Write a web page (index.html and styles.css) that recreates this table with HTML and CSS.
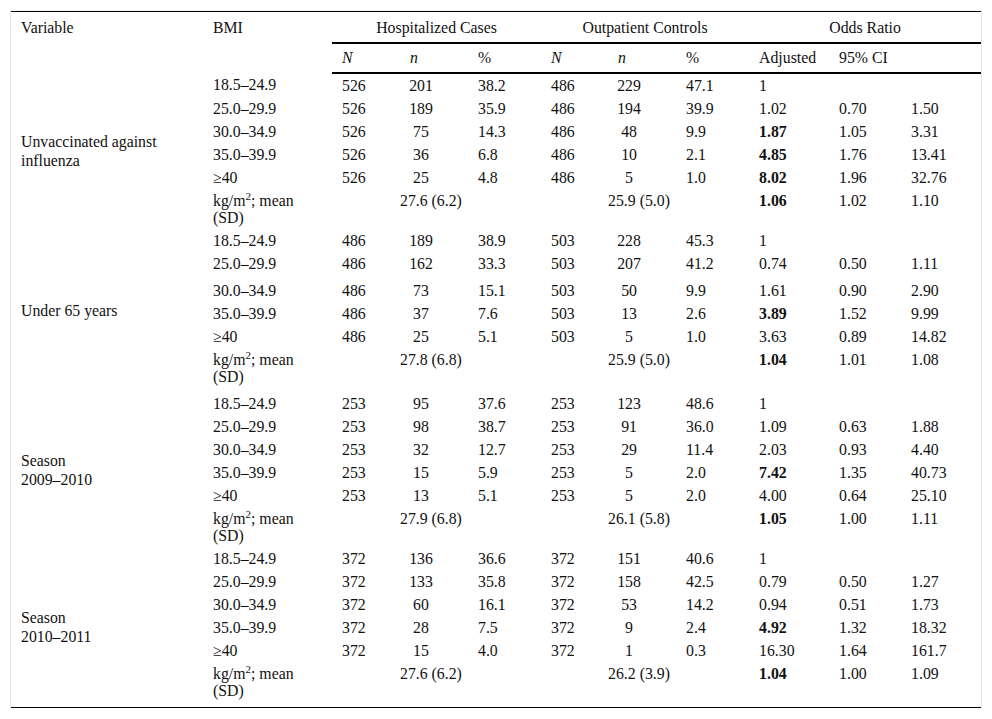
FILE: index.html
```html
<!DOCTYPE html>
<html>
<head>
<meta charset="utf-8">
<link rel="stylesheet" href="styles.css">
</head>
<body>
<div class="frame">
<table class="tbl">
<colgroup>
<col class="c-var"><col class="c-bmi"><col class="c-n1"><col class="c-n2"><col class="c-p"><col class="c-n1b"><col class="c-n2"><col class="c-p"><col class="c-adj"><col class="c-ci"><col class="c-up">
</colgroup>
<thead>
<tr class="h1">
<th rowspan="2" class="top">Variable</th>
<th rowspan="2" class="top">BMI</th>
<th colspan="3" class="grp">Hospitalized Cases</th>
<th colspan="3" class="grp">Outpatient Controls</th>
<th colspan="3" class="grp">Odds Ratio</th>
</tr>
<tr class="h2">
<th><i>N</i></th><th><i>n</i></th><th>%</th>
<th><i>N</i></th><th><i>n</i></th><th>%</th>
<th>Adjusted</th><th>95% CI</th><th></th>
</tr>
</thead>
<tbody>
<tr><td rowspan="6" class="var">Unvaccinated against<br>influenza</td><td>18.5–24.9</td><td>526</td><td class="ctr">201</td><td>38.2</td><td>486</td><td class="ctr">229</td><td>47.1</td><td>1</td><td></td><td></td></tr>
<tr><td>25.0–29.9</td><td>526</td><td class="ctr">189</td><td>35.9</td><td>486</td><td class="ctr">194</td><td>39.9</td><td>1.02</td><td>0.70</td><td>1.50</td></tr>
<tr><td>30.0–34.9</td><td>526</td><td class="ctr">75</td><td>14.3</td><td>486</td><td class="ctr">48</td><td>9.9</td><td><b>1.87</b></td><td>1.05</td><td>3.31</td></tr>
<tr><td>35.0–39.9</td><td>526</td><td class="ctr">36</td><td>6.8</td><td>486</td><td class="ctr">10</td><td>2.1</td><td><b>4.85</b></td><td>1.76</td><td>13.41</td></tr>
<tr><td>≥40</td><td>526</td><td class="ctr">25</td><td>4.8</td><td>486</td><td class="ctr">5</td><td>1.0</td><td><b>8.02</b></td><td>1.96</td><td>32.76</td></tr>
<tr><td>kg/m<sup>2</sup>; mean<br>(SD)</td><td></td><td class="mean">27.6 (6.2)</td><td></td><td></td><td class="mean2">25.9 (5.0)</td><td></td><td><b>1.06</b></td><td>1.02</td><td>1.10</td></tr>

<tr><td rowspan="6" class="var">Under 65 years</td><td>18.5–24.9</td><td>486</td><td class="ctr">189</td><td>38.9</td><td>503</td><td class="ctr">228</td><td>45.3</td><td>1</td><td></td><td></td></tr>
<tr class="pad"><td>25.0–29.9</td><td>486</td><td class="ctr">162</td><td>33.3</td><td>503</td><td class="ctr">207</td><td>41.2</td><td>0.74</td><td>0.50</td><td>1.11</td></tr>
<tr><td>30.0–34.9</td><td>486</td><td class="ctr">73</td><td>15.1</td><td>503</td><td class="ctr">50</td><td>9.9</td><td>1.61</td><td>0.90</td><td>2.90</td></tr>
<tr><td>35.0–39.9</td><td>486</td><td class="ctr">37</td><td>7.6</td><td>503</td><td class="ctr">13</td><td>2.6</td><td><b>3.89</b></td><td>1.52</td><td>9.99</td></tr>
<tr><td>≥40</td><td>486</td><td class="ctr">25</td><td>5.1</td><td>503</td><td class="ctr">5</td><td>1.0</td><td>3.63</td><td>0.89</td><td>14.82</td></tr>
<tr class="pad"><td>kg/m<sup>2</sup>; mean<br>(SD)</td><td></td><td class="mean">27.8 (6.8)</td><td></td><td></td><td class="mean2">25.9 (5.0)</td><td></td><td><b>1.04</b></td><td>1.01</td><td>1.08</td></tr>

<tr><td rowspan="6" class="var">Season<br>2009–2010</td><td>18.5–24.9</td><td>253</td><td class="ctr">95</td><td>37.6</td><td>253</td><td class="ctr">123</td><td>48.6</td><td>1</td><td></td><td></td></tr>
<tr><td>25.0–29.9</td><td>253</td><td class="ctr">98</td><td>38.7</td><td>253</td><td class="ctr">91</td><td>36.0</td><td>1.09</td><td>0.63</td><td>1.88</td></tr>
<tr><td>30.0–34.9</td><td>253</td><td class="ctr">32</td><td>12.7</td><td>253</td><td class="ctr">29</td><td>11.4</td><td>2.03</td><td>0.93</td><td>4.40</td></tr>
<tr><td>35.0–39.9</td><td>253</td><td class="ctr">15</td><td>5.9</td><td>253</td><td class="ctr">5</td><td>2.0</td><td><b>7.42</b></td><td>1.35</td><td>40.73</td></tr>
<tr><td>≥40</td><td>253</td><td class="ctr">13</td><td>5.1</td><td>253</td><td class="ctr">5</td><td>2.0</td><td>4.00</td><td>0.64</td><td>25.10</td></tr>
<tr><td>kg/m<sup>2</sup>; mean<br>(SD)</td><td></td><td class="mean">27.9 (6.8)</td><td></td><td></td><td class="mean2">26.1 (5.8)</td><td></td><td><b>1.05</b></td><td>1.00</td><td>1.11</td></tr>

<tr><td rowspan="6" class="var">Season<br>2010–2011</td><td>18.5–24.9</td><td>372</td><td class="ctr">136</td><td>36.6</td><td>372</td><td class="ctr">151</td><td>40.6</td><td>1</td><td></td><td></td></tr>
<tr><td>25.0–29.9</td><td>372</td><td class="ctr">133</td><td>35.8</td><td>372</td><td class="ctr">158</td><td>42.5</td><td>0.79</td><td>0.50</td><td>1.27</td></tr>
<tr><td>30.0–34.9</td><td>372</td><td class="ctr">60</td><td>16.1</td><td>372</td><td class="ctr">53</td><td>14.2</td><td>0.94</td><td>0.51</td><td>1.73</td></tr>
<tr><td>35.0–39.9</td><td>372</td><td class="ctr">28</td><td>7.5</td><td>372</td><td class="ctr">9</td><td>2.4</td><td><b>4.92</b></td><td>1.32</td><td>18.32</td></tr>
<tr><td>≥40</td><td>372</td><td class="ctr">15</td><td>4.0</td><td>372</td><td class="ctr">1</td><td>0.3</td><td>16.30</td><td>1.64</td><td>161.7</td></tr>
<tr class="last"><td>kg/m<sup>2</sup>; mean<br>(SD)</td><td></td><td class="mean">27.6 (6.2)</td><td></td><td></td><td class="mean2">26.2 (3.9)</td><td></td><td><b>1.04</b></td><td>1.00</td><td>1.09</td></tr>
</tbody>
</table>
</div>
</body>
</html>
```
FILE: styles.css
```css
html, body {
  margin: 0;
  padding: 0;
  background: #ffffff;
}
body {
  padding: 10px 10px 0 10px;
  font-family: "Liberation Serif", "Times New Roman", serif;
  font-size: 15.8px;
  color: #111;
}
.frame {
  width: 970px;
  border-left: 1px solid #e6e6e6;
  border-right: 1px solid #e6e6e6;
  border-top: 1px solid #f3f3f3;
}
.tbl {
  width: 970px;
  table-layout: fixed;
  border-collapse: collapse;
  border-spacing: 0;
  border-top: 1px solid #000;
  border-bottom: 1px solid #000;
}
.c-var { width: 192px; }
.c-bmi { width: 129px; }
.c-n1 { width: 68px; }
.c-n2 { width: 68px; }
.c-p { width: 73px; }
.c-n1b { width: 67px; }
.c-adj { width: 80px; }
.c-ci { width: 72px; }
.c-up { width: 80px; }

.tbl th {
  font-weight: normal;
  text-align: left;
  padding: 7px 10px 6px 10px;
  line-height: 17px;
  vertical-align: top;
}
.tbl th.grp {
  text-align: center;
  border-bottom: 2px solid #000;
}
.tbl tr.h2 th {
  padding-top: 5px;
  padding-bottom: 6px;
  border-bottom: 2px solid #000;
}
.tbl th i {
  font-style: italic;
}
.tbl td {
  padding: 3px 10px;
  line-height: 17px;
  vertical-align: top;
  text-align: left;
  white-space: nowrap;
}
.tbl td.ctr {
  text-align: center;
  padding-left: 0;
  padding-right: 26px;
}
.tbl td.mean {
  text-align: center;
  padding-left: 0;
  padding-right: 14px;
}
.tbl td.mean2 {
  text-align: center;
  padding-left: 0;
  padding-right: 26px;
}
.tbl td.var {
  vertical-align: middle;
  white-space: normal;
  line-height: 19px;
}
.tbl tr.pad td {
  padding-bottom: 7px;
}
.tbl tr.pad td.var {
  padding-top: 5px;
  padding-bottom: 3px;
}
.tbl tr.last td {
  padding-bottom: 8px;
}
.tbl td b {
  font-weight: bold;
}
sup {
  font-size: 0.7em;
  vertical-align: super;
  line-height: 0;
}
```
